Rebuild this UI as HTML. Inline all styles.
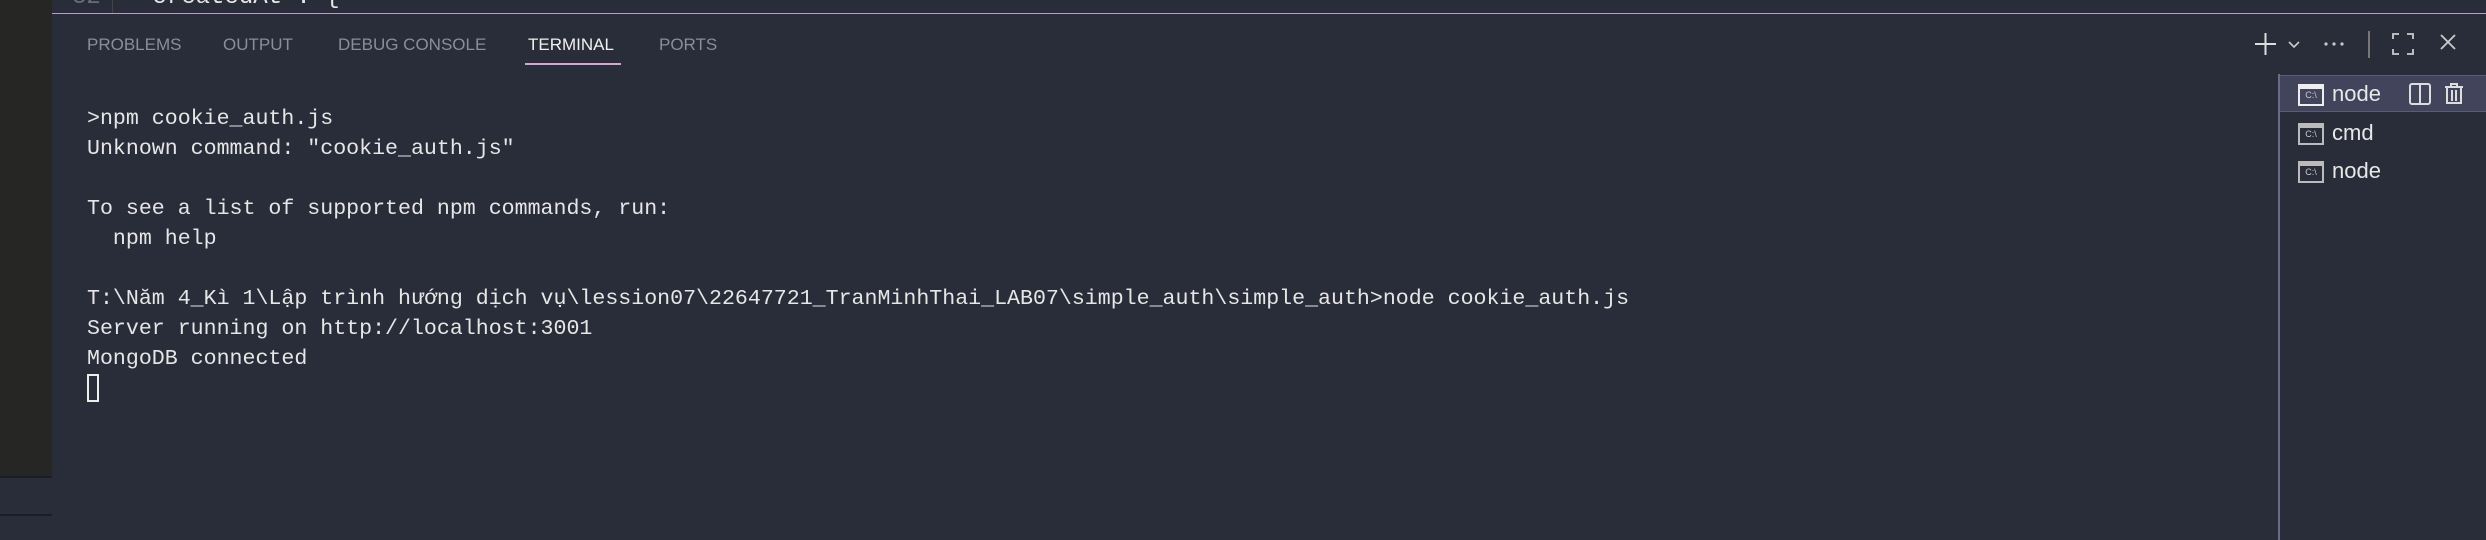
<!DOCTYPE html>
<html><head><meta charset="utf-8"><style>
*{margin:0;padding:0;box-sizing:border-box}
body{width:2486px;height:540px;background:#292c39;position:relative;overflow:hidden;font-family:"Liberation Sans",sans-serif}
.abs{position:absolute}
.mono{font-family:"Liberation Mono","DejaVu Sans Mono",monospace;font-size:21.6px;color:#e6e6e6;white-space:pre;line-height:30px}
.tab{position:absolute;top:35px;font-size:17px;color:#8a8d9a;letter-spacing:0}
.row{position:absolute;left:2280px;width:206px;height:37px;font-size:22px;color:#e8e8e8}
.ic{position:absolute;left:18px;top:8px;width:26px;height:22px;border:2px solid #bbb;border-top-width:5px;font-size:9px;color:#ccc;line-height:13px;text-align:center;font-family:"Liberation Sans",sans-serif}
</style></head><body>
<div class="abs" style="left:0;top:0;width:52px;height:476px;background:#262624"></div>
<div class="abs" style="left:0;top:476px;width:52px;height:2px;background:#1c1d24"></div>
<div class="abs" style="left:0;top:514px;width:52px;height:2px;background:#1c1d24"></div>
<div class="abs" style="left:52px;top:0;width:2434px;height:13px;background:#292c39;overflow:hidden">
 <div class="mono" style="position:absolute;left:20px;top:-17px;color:#6a6d78;font-size:24px">32</div>
 <div class="abs" style="left:60px;top:0;width:1px;height:13px;background:#444"></div>
 <div class="mono" style="position:absolute;left:86px;top:-17px;font-size:24px">"createdAt": {</div>
</div>
<div class="abs" style="left:52px;top:13px;width:2434px;height:1px;background:#b59ccd"></div>
<div class="tab" style="left:87px">PROBLEMS</div>
<div class="tab" style="left:223px">OUTPUT</div>
<div class="tab" style="left:338px">DEBUG CONSOLE</div>
<div class="tab" style="left:528px;color:#f0f0f0">TERMINAL</div>
<div class="abs" style="left:525px;top:63px;width:96px;height:2px;background:#d9a3d3"></div>
<div class="tab" style="left:659px">PORTS</div>

<svg class="abs" style="left:2250px;top:30px" width="220" height="30" viewBox="0 0 220 30">
 <path d="M5 14H26M15.5 3V25" stroke="#ddd" stroke-width="2"/>
 <path d="M39 12l5 5 5-5" stroke="#ccc" stroke-width="1.6" fill="none"/>
 <circle cx="76" cy="14" r="1.6" fill="#ccc"/><circle cx="84" cy="14" r="1.6" fill="#ccc"/><circle cx="92" cy="14" r="1.6" fill="#ccc"/>
 <path d="M119 1V28" stroke="#777" stroke-width="2"/>
 <path d="M143 9V4h6M157 4h6v5M163 19v5h-6M149 24h-6v-5" stroke="#ccc" stroke-width="1.8" fill="none"/>
 <path d="M191 5l14 14M205 5l-14 14" stroke="#ccc" stroke-width="1.8"/>
</svg>

<div class="abs" style="left:2278px;top:74px;width:2px;height:466px;background:#6e6a86"></div>
<div class="row" style="top:75px;background:#41445a;border-top:1px solid #5a5d72;border-bottom:1px solid #5a5d72">
 <div class="ic" style="border-color:#eee">C:\</div><span class="abs" style="left:52px;top:5px">node</span>
 <svg class="abs" style="left:128px;top:6px" width="70" height="26"><rect x="2" y="2" width="20" height="20" rx="2" fill="none" stroke="#ddd" stroke-width="2"/><path d="M12 2V22" stroke="#ddd" stroke-width="2"/><path d="M37 5h18M43 5V2h6v3M39 5v16h14V5M44 8v11M48 8v11" stroke="#ddd" stroke-width="2" fill="none"/></svg>
</div>
<div class="row" style="top:115px"><div class="ic">C:\</div><span class="abs" style="left:52px;top:5px">cmd</span></div>
<div class="row" style="top:153px"><div class="ic">C:\</div><span class="abs" style="left:52px;top:5px">node</span></div>

<div class="mono abs" style="left:87px;top:104px">&gt;npm cookie_auth.js
Unknown command: "cookie_auth.js"

To see a list of supported npm commands, run:
  npm help

T:\Năm 4_Kì 1\Lập trình hướng dịch vụ\lession07\22647721_TranMinhThai_LAB07\simple_auth\simple_auth&gt;node cookie_auth.js
Server running on http://localhost:3001
MongoDB connected</div>
<div class="abs" style="left:87px;top:374px;width:12px;height:28px;border:2px solid #eee"></div>
</body></html>
